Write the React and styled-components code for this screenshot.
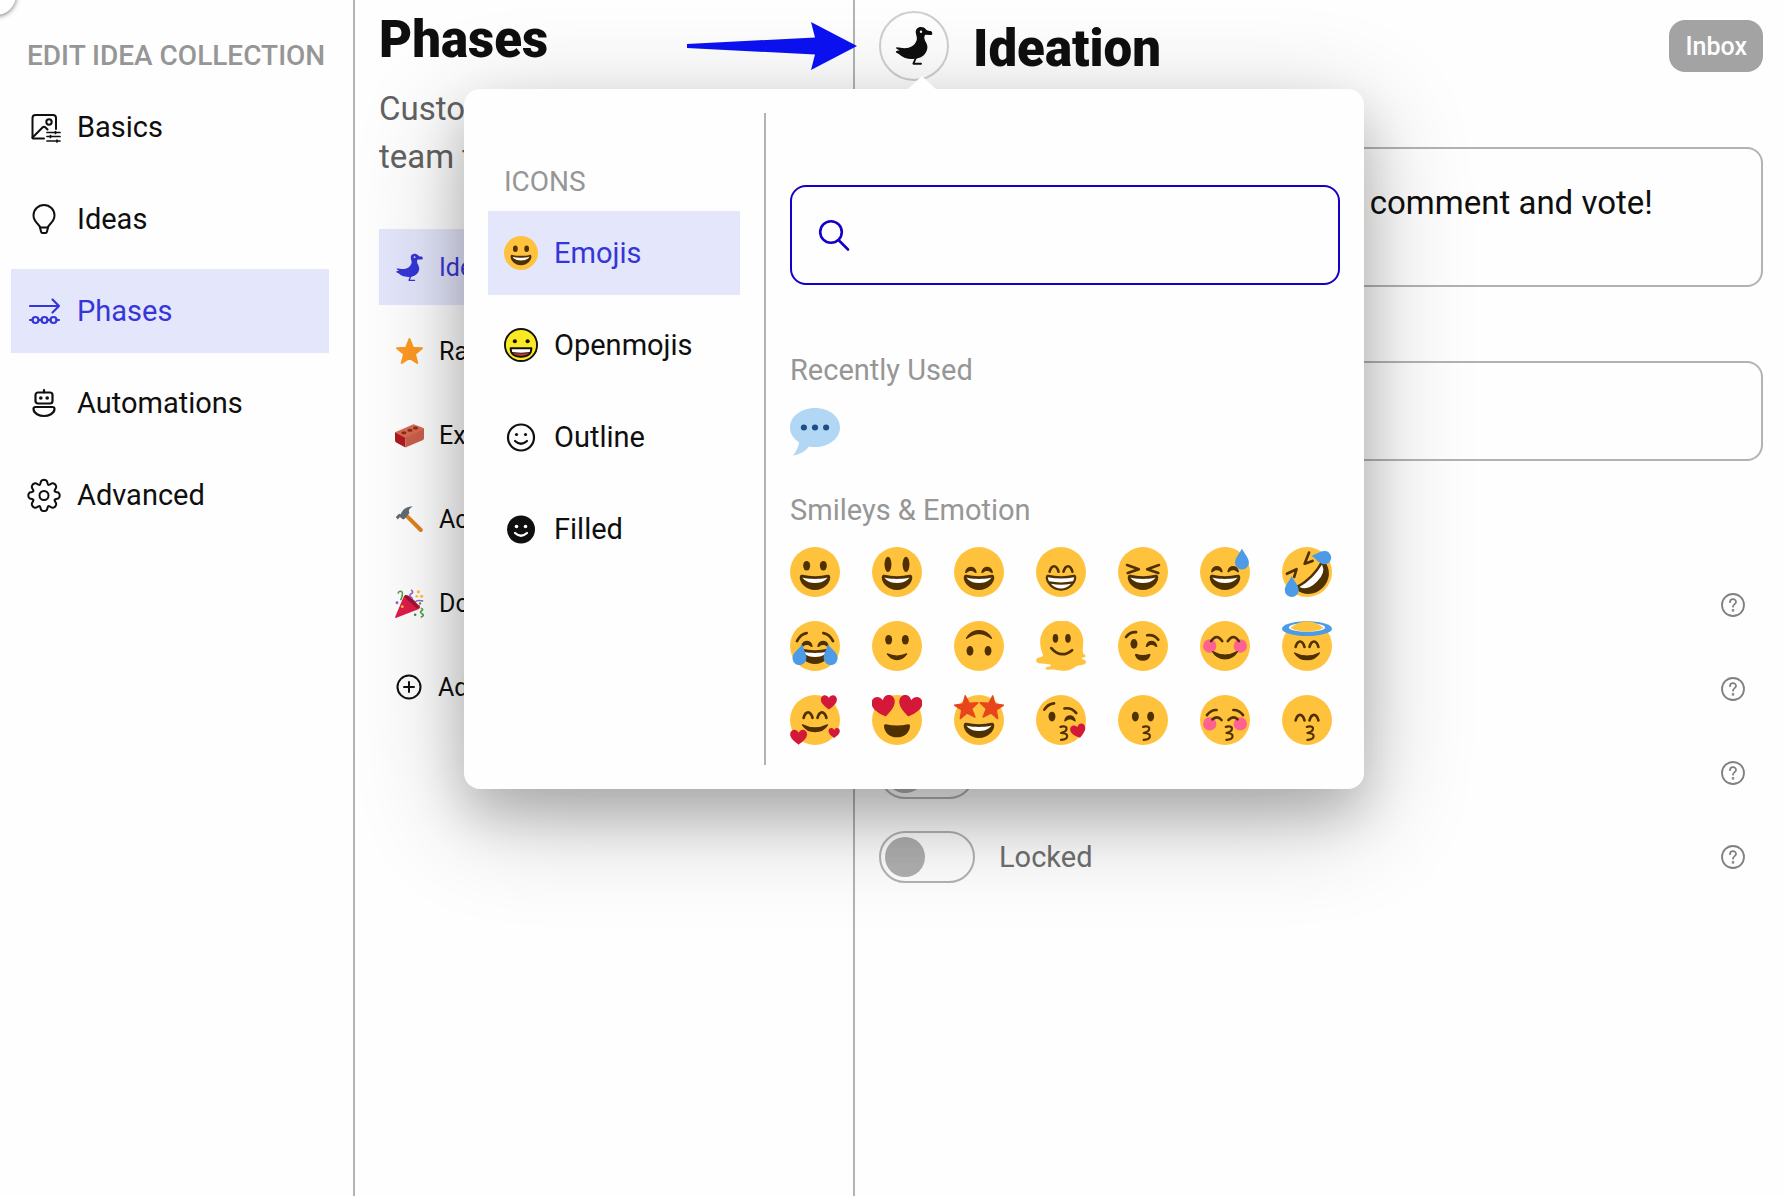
import React from "react";
import styled, { createGlobalStyle, css } from "styled-components";

const color = {
  ink: "#0f0f0f",
  accent: "#3636d8",
  accentSoft: "#e4e6fb",
  muted: "#969696",
  text: "#626262",
  line: "#b3b3b3",
  focus: "#1400c8",
  face: "#ffc23c",
  brown: "#4f3000",
  tear: "#4d9be6",
  heart: "#d31838",
  blush: "#ff6190",
};

const GlobalStyle = createGlobalStyle`
  *, *::before, *::after { box-sizing: border-box; }
  body {
    margin: 0;
    background: #fefefe;
    color: ${color.ink};
    font-family: Roboto, "Liberation Sans", sans-serif;
    font-size: 29px;
    overflow: hidden;
  }
  button, input, textarea { font: inherit; color: inherit; }
  h1, h2, h3, p, ul { margin: 0; padding: 0; }
  ul { list-style: none; }
`;

/* ---------- layout ---------- */

const Page = styled.div`
  display: flex;
  min-height: 100vh;
`;

const Sidebar = styled.nav`
  flex: 0 0 355px;
  border-right: 2px solid ${color.line};
  padding: 36px 24px 0 11px;
`;

const SectionLabel = styled.h2`
  padding-left: 16px;
  font-size: 28px;
  font-weight: ${(p) => (p.$light ? 400 : 500)};
  line-height: 40px;
  white-space: nowrap;
  color: ${color.muted};
`;

const NavList = styled.ul`
  display: flex;
  flex-direction: column;
  gap: 8px;
  margin-top: 9px;
`;

const NavButton = styled.button`
  display: flex;
  align-items: center;
  gap: 16px;
  width: 100%;
  height: 84px;
  padding: 0 16px;
  border: 0;
  background: ${(p) => (p.$active ? color.accentSoft : "transparent")};
  color: ${(p) => (p.$active ? color.accent : color.ink)};
  font-size: 29px;
  text-align: left;
  white-space: nowrap;
  cursor: pointer;
  svg { flex: none; }
`;

const PhasesColumn = styled.section`
  position: relative;
  flex: 0 0 500px;
  border-right: 2px solid ${color.line};
  padding: 12px 0 0 24px;
`;

const Title = styled.h1`
  font-size: 51px;
  font-weight: 900;
  line-height: ${(p) => (p.$tall ? 76 : 56)}px;
`;

const Intro = styled.p`
  margin-top: 17px;
  padding-right: 24px;
  font-size: 33px;
  line-height: 48px;
  color: ${color.text};
`;

const PhaseList = styled.ul`
  display: flex;
  flex-direction: column;
  gap: 8px;
  margin-top: 48px;
`;

const PhaseButton = styled(NavButton)`
  gap: 15px;
  height: 76px;
  font-size: 25px;
`;

const Pointer = styled.svg`
  position: absolute;
  top: 22px;
  right: -4px;
  z-index: 3;
`;

const Detail = styled.main`
  flex: 1;
  padding: 11px 22px 0 24px;
`;

const DetailHeader = styled.header`
  display: flex;
  align-items: flex-start;
  gap: 24px;
`;

const PickerAnchor = styled.div`
  position: relative;
  z-index: 2;
  flex: none;
`;

const IconCircle = styled.button`
  display: grid;
  place-items: center;
  width: 70px;
  height: 70px;
  padding: 0;
  border: 2px solid #cfcfcf;
  border-radius: 50%;
  background: #fefefe;
  cursor: pointer;
`;

const InboxButton = styled.button`
  height: 52px;
  margin: 9px 0 0 auto;
  padding: 0 16px;
  border: 0;
  border-radius: 16px;
  background: #a3a3a3;
  color: #fff;
  font-size: 25px;
  font-weight: 500;
`;

const Fields = styled.div`
  display: flex;
  flex-direction: column;
  padding-top: 8px;
`;

const FieldLabel = styled.label`
  height: ${(p) => (p.$roomy ? 74 : 52)}px;
  padding-top: ${(p) => (p.$roomy ? 24 : 8)}px;
  font-size: 25px;
  line-height: 32px;
  color: ${color.text};
`;

const fieldBox = css`
  width: 100%;
  border: 2px solid ${color.line};
  border-radius: 16px;
  background: transparent;
  font-size: 33px;
  outline: none;
`;

const TextArea = styled.textarea`
  ${fieldBox}
  display: block;
  height: 140px;
  padding: 30px 18px;
  line-height: 48px;
  resize: none;
`;

const TextInput = styled.input`
  ${fieldBox}
  height: 100px;
  padding: 0 18px;
`;

const Settings = styled.ul`
  margin-top: 102px;
`;

const SettingRow = styled.li`
  display: flex;
  align-items: center;
  height: 84px;
  padding-right: 18px;
`;

const SettingLabel = styled.label`
  display: flex;
  align-items: center;
  gap: 24px;
  color: #707070;
`;

const Toggle = styled.input`
  appearance: none;
  display: flex;
  align-items: center;
  width: 96px;
  height: 52px;
  margin: 0;
  padding: 0 4px;
  border: 2px solid ${color.line};
  border-radius: 26px;
  background: transparent;
  &::before {
    content: "";
    width: 40px;
    height: 40px;
    border-radius: 50%;
    background: #b0b0b0;
  }
  &:checked { justify-content: flex-end; }
`;

const HelpButton = styled.button`
  display: flex;
  margin-left: auto;
  padding: 0;
  border: 0;
  background: none;
  color: #808080;
`;

const CornerBubble = styled.span`
  position: absolute;
  top: -25px;
  left: -24px;
  width: 40px;
  height: 40px;
  border-radius: 50%;
  background: #fff;
  box-shadow: 0 1px 5px rgba(0, 0, 0, 0.55);
`;

/* ---------- popover ---------- */

const Popover = styled.div`
  position: absolute;
  top: 78px;
  left: -415px;
  display: flex;
  width: 900px;
  height: 700px;
  padding: 24px;
  border-radius: 16px;
  background: #fefefe;
  box-shadow: 0 26px 50px rgba(0, 0, 0, 0.18), 0 28px 110px rgba(0, 0, 0, 0.24);
  &::before {
    content: "";
    position: absolute;
    top: -13px;
    left: 444px;
    border: solid transparent;
    border-width: 0 14px 13px;
    border-bottom-color: #fefefe;
  }
`;

const PickerMenu = styled.div`
  width: 278px;
  padding: 49px 24px 0 0;
  border-right: 2px solid ${color.line};
`;

const PickerPane = styled.div`
  flex: 1;
  padding: 72px 0 0 24px;
  overflow: hidden;
`;

const SearchBox = styled.label`
  display: flex;
  align-items: center;
  gap: 16px;
  height: 100px;
  padding: 0 25px;
  border: 2px solid ${color.focus};
  border-radius: 16px;
  color: ${color.focus};
  svg { flex: none; }
`;

const SearchInput = styled.input`
  flex: 1;
  min-width: 0;
  border: 0;
  background: none;
  color: ${color.ink};
  outline: none;
`;

const GroupTitle = styled.h3`
  margin-top: ${(p) => (p.$first ? 65 : 33)}px;
  font-size: 29px;
  font-weight: 400;
  line-height: 40px;
  color: ${color.muted};
`;

const EmojiGrid = styled.div`
  display: grid;
  grid-template-columns: repeat(7, 50px);
  gap: 24px 32px;
  margin-top: 17px;
`;

const EmojiButton = styled.button`
  display: flex;
  width: 50px;
  height: 50px;
  padding: 0;
  border: 0;
  background: none;
  cursor: pointer;
`;

/* ---------- line icons ---------- */

const Line = ({ w = 32, sw = 2, children, ...rest }) => (
  <svg width={w} height={w} viewBox={`0 0 ${w} ${w}`} fill="none" stroke="currentColor"
    strokeWidth={sw} strokeLinecap="round" strokeLinejoin="round" aria-hidden="true" {...rest}>
    {children}
  </svg>
);

const BasicsIcon = () => (
  <Line w={34}>
    <path d="M17 28.500H6L5.500 28V8a3 3 0 0 1 3-3H26a3 3 0 0 1 3 3v11" />
    <path d="M5.500 27.500L15.500 17.500Q17 16 18.500 17.500L20.500 19.500" />
    <circle cx="22" cy="12" r="2.700" />
    <path d="M20 22.500H33M20 26.500H33M20 31H33" strokeWidth="1.700" />
    <path d="M28.500 21.500v2M23.500 25.500v2M30 30v2" strokeWidth="1.700" />
  </Line>
);

const BulbIcon = () => (
  <Line w={34}>
    <path d="M13 25.500c0-3-6.500-5-6.500-12a10.500 10.500 0 0 1 21 0c0 7-6.500 9-6.500 12z" />
    <path d="M13 25.500l1 4q.3 1.500 1.500 1.500h3q1.200 0 1.500-1.500l1-4" />
  </Line>
);

const PhasesIcon = () => (
  <Line w={34} sw={2.2}>
    <path d="M3 12H32M25.500 5.500L32 12L25.500 18.500" />
    <circle cx="8.500" cy="26" r="3" />
    <circle cx="17.500" cy="26" r="3" />
    <circle cx="26.500" cy="26" r="3" />
    <path d="M3 26h2.500M11.500 26h3M20.500 26h3M29.500 26H32" />
  </Line>
);

const RobotIcon = () => (
  <Line w={34} sw={2.2}>
    <rect x="8.500" y="6.500" width="17" height="11" rx="2.500" />
    <path d="M17 4V6.500" />
    <path d="M8.500 21h17q2 0 2 2c0 4.500-6 7-10.500 7S6.500 27.500 6.500 23q0-2 2-2z" />
    <g fill="currentColor" stroke="none">
      <circle cx="13.800" cy="12" r="1.800" />
      <circle cx="20.200" cy="12" r="1.800" />
    </g>
  </Line>
);

const gearPath = (() => {
  const pts = [];
  for (let i = 0; i < 160; i++) {
    const t = (i / 160) * Math.PI * 2;
    const wave = Math.cos(8 * t);
    const r = 13.6 + 2.1 * Math.sign(wave) * Math.pow(Math.abs(wave), 0.7);
    const turn = t + 0.05 * Math.sin(8 * t);
    pts.push(`${(17 + r * Math.sin(turn)).toFixed(2)} ${(17.5 - r * Math.cos(turn)).toFixed(2)}`);
  }
  return `M${pts.join("L")}Z`;
})();

const GearIcon = () => (
  <Line w={34}>
    <path d={gearPath} />
    <circle cx="17" cy="17.500" r="4.500" />
  </Line>
);

const PlusCircleIcon = () => (
  <Line w={28}>
    <circle cx="14" cy="14" r="11.500" />
    <path d="M14 9v10M9 14h10" />
  </Line>
);

const SearchIcon = () => (
  <Line w={34} sw={2.6}>
    <circle cx="14" cy="14" r="10.800" />
    <path d="M22 22.500L31 31.500" />
  </Line>
);

const HelpIcon = () => (
  <Line w={24} sw={1.8}>
    <circle cx="12" cy="12" r="11" />
    <path d="M9 9.200c0-4 6-4 6-.3c0 2.100-3 2.300-3 4.800" />
    <circle cx="12" cy="17.400" r=".5" />
  </Line>
);

const OutlineSmile = () => (
  <Line w={34} sw={2.2}>
    <circle cx="17" cy="17.500" r="13" />
    <path d="M11 21q6 5.500 12 0" />
    <g fill="currentColor" stroke="none">
      <circle cx="12.500" cy="14.500" r="1.600" />
      <circle cx="21.500" cy="14.500" r="1.600" />
    </g>
  </Line>
);

const FilledSmile = () => (
  <svg width="34" height="34" viewBox="0 0 34 34" aria-hidden="true">
    <circle cx="17" cy="17.500" r="14" fill={color.ink} />
    <circle cx="12.500" cy="14.500" r="1.800" fill="#fff" />
    <circle cx="21.500" cy="14.500" r="1.800" fill="#fff" />
    <path d="M11 21q6 5.500 12 0" fill="none" stroke="#fff" strokeWidth="2.200" strokeLinecap="round" />
  </svg>
);

const Duck = ({ size = 40, eye = "#fefefe" }) => (
  <svg width={size} height={size} viewBox="0 0 38 40" fill="currentColor" aria-hidden="true">
    <path d="M26 1c-3.600 0-5.600 2.600-5.200 5.800c.3 2.700 1.500 4.300 1 6.700c-.8 4.400-4.800 8-10 8.600c-4 .5-6.800-.8-10-.8c-1.300.2-.6 1.500 1.200 2.300l1.800.9c-1.800.1-4 .3-4 1.200c0 1.200 2 1.500 3 2.300c3 3 7.800 5 13.200 5c2 0 3.300-.1 4.800-.4c5.600-1 10.200-5 10.600-11c.3-4.300-3.100-6.200-3.100-10c0-1.200.4-2.200 1.200-2.800l5 .2c1.600 0 1.900-.7 1.700-2.100c-.1-1.700-.8-1.900-2.600-2c-1.600-.1-2.800-.5-3.800-1.700C29.700 1.900 28.200 1 26 1z" />
    <circle cx="26" cy="5.800" r="1.200" fill={eye} />
    <path d="M21 31.500L18.400 37.700H26" fill="none" stroke="currentColor" strokeWidth="1.900" strokeLinecap="round" strokeLinejoin="round" />
  </svg>
);

/* ---------- phase pictures ---------- */

const Pic = ({ children }) => (
  <svg width="29" height="29" viewBox="0 0 36 36" aria-hidden="true">{children}</svg>
);

const StarPic = () => (
  <Pic>
    <path fill="#ff9a24" stroke="#ff9a24" strokeWidth="2.500" strokeLinejoin="round"
      d="M18 2.500l4.200 10.700 11.300.7-8.800 7.300 2.900 11.100L18 26.100l-9.600 6.200 2.900-11.100-8.800-7.300 11.300-.7z" />
  </Pic>
);

const BrickPic = () => (
  <Pic>
    <path fill="#d96b52" d="M0 14L23 4l13 5v3L13 22z" />
    <path fill="#b01820" d="M0 14l13 7v12L2 27q-2-1-2-3z" />
    <path fill="#c9604d" d="M13 21l23-11v11q0 2-2 3L13 33z" />
    <ellipse cx="11" cy="14.500" rx="3.200" ry="1.900" fill="#8d2a1e" />
    <ellipse cx="18.500" cy="11.500" rx="3.200" ry="1.900" fill="#8d2a1e" />
    <ellipse cx="25.500" cy="8.800" rx="3.200" ry="1.900" fill="#8d2a1e" />
  </Pic>
);

const HammerPic = () => (
  <Pic>
    <path d="M12 11L32 31" stroke="#e0811f" strokeWidth="5" strokeLinecap="round" />
    <path fill="#5f6b73" d="M1 15l4-4 2 .5C9 7 12 2 22 1.500c-4 3-6 5-4 8.500l-6 7-2 1-4-3-2.500 3z" />
  </Pic>
);

const PopperPic = () => (
  <Pic>
    <path fill="#dd1c48" d="M0 35L11 9q2-3 9 4t10 7q3 3-1 5L1 36z" />
    <path fill="#9e1234" d="M12 8c3-2 9 3 12.500 7s6.500 7 4 9.500c-3-2-5-3-8.500-7S12 12 12 8z" />
    <path d="M4 6q0-4 4-3q3 2-1 11" fill="none" stroke="#4fa640" strokeWidth="2" />
    <path d="M20 1q4 3 0 5t2 6M25 16q3-3 10-1" fill="none" stroke="#9266cc" strokeWidth="2" />
    <path d="M32 24q4 1 1 3t1 4q3 2-2 4" fill="none" stroke="#4fa640" strokeWidth="2" />
    <g fill="#ffc23c"><circle cx="29" cy="3.500" r="2" /><circle cx="33" cy="9" r="2" /><circle cx="27" cy="9" r="1.700" /><circle cx="9" cy="22" r="1.700" /></g>
    <circle cx="2.500" cy="17" r="1.800" fill="#9266cc" />
    <circle cx="25" cy="32" r="1.600" fill="#3a8d4c" />
    <circle cx="31" cy="18" r="1.500" fill="#5c9c3c" />
  </Pic>
);

/* ---------- emoji parts (36 × 36 grid) ---------- */

const Stroke = ({ d, w = 1.9 }) => (
  <path d={d} fill="none" stroke={color.brown} strokeWidth={w} strokeLinecap="round" strokeLinejoin="round" />
);
const Disc = () => <circle cx="18" cy="18" r="18" fill={color.face} />;
const Eyes = ({ y = 13.5, a = 12, b = 24, rx = 2.5, ry = 3.5 }) => (
  <g fill={color.brown}>
    <ellipse cx={a} cy={y} rx={rx} ry={ry} />
    <ellipse cx={b} cy={y} rx={rx} ry={ry} />
  </g>
);
const Grin = () => (
  <>
    <path fill={color.brown} d="M18 21c-3.600 0-6-.4-9-1c-.7-.1-2 0-2 2c0 4 4.600 9 11 9s11-5 11-9c0-2-1.300-2.100-2-2c-3 .6-5.400 1-9 1z" />
    <path fill="#fff" d="M9 22s3 1 9 1s9-1 9-1s-2 4-9 4s-9-4-9-4z" />
  </>
);
const crescent = "M0 4C.8-1 7.500-1 8.300 4c.2.900-.7 1-1.300.5c-1.400-1.600-4.300-1.600-5.700 0C.700 5-.2 4.900 0 4z";
const SoftEyes = ({ y = 14, a = 8, b = 19.7 }) => (
  <g fill={color.brown}>
    <path d={crescent} transform={`translate(${a} ${y})`} />
    <path d={crescent} transform={`translate(${b} ${y})`} />
  </g>
);
const ArchEyes = ({ y = 17.8 }) => (
  <>
    <Stroke d={`M9.800 ${y}c1.500-5.300 5-5.300 6.400 0`} />
    <Stroke d={`M19.800 ${y}c1.500-5.300 5-5.300 6.400 0`} />
  </>
);
/* Crescent smile: "depth" is the lower edge, "rise" the upper edge. */
const Smile = ({ y = 22, a = 8.5, depth = 7, rise = 5 }) => {
  const b = 36 - a;
  return <path fill={color.brown} stroke={color.brown} strokeWidth=".9" strokeLinejoin="round"
    d={`M${a} ${y}Q18 ${y + rise} ${b} ${y}C${b - 4} ${y + depth} ${a + 4} ${y + depth} ${a} ${y}z`} />;
};
const Drop = ({ t }) => (
  <path transform={t} fill={color.tear} d="M5 0C6.500 3.500 10 6.500 10 10.300A5 4.900 0 0 1 0 10.300C0 6.500 3.500 3.500 5 0z" />
);
const Heart = ({ x, y, s = 1, r = 0 }) => (
  <path fill={color.heart} transform={`translate(${x} ${y}) rotate(${r}) scale(${s})`}
    d="M0 5.200C-2.500 3.500-5.800 1-5.800-1.900C-5.800-5.500-1.500-6.300 0-3C1.500-6.300 5.800-5.500 5.800-1.900C5.800 1 2.500 3.500 0 5.200z" />
);
const Blush = ({ y = 18 }) => (
  <g fill={color.blush}>
    <circle cx="7" cy={y} r="4.800" />
    <circle cx="29" cy={y} r="4.800" />
  </g>
);
const Kiss = ({ x = 18 }) => (
  <Stroke w={1.5} d={`M${x} 23c2-.9 4.800-.3 4.500 1.500c-.3 1.700-2.200 2.500-4 2.800c2 0 4.400.4 4.500 2.300c0 1.800-2 2.600-4.500 2.700`} />
);
const starShape = "M0-8.500L2.200-2.900L8.500-2.600L3.600 1.300L5.300 7.500L0 4L-5.300 7.500L-3.600 1.300L-8.500-2.600L-2.200-2.900Z";

const emojis = {
  "grinning face": <><Disc /><Eyes /><Grin /></>,
  "grinning face with big eyes": <><Disc /><Eyes a={11.5} b={24.5} y={12.5} ry={5.5} /><Grin /></>,
  "grinning face with smiling eyes": <><Disc /><SoftEyes /><Grin /></>,
  "beaming face": (
    <>
      <Disc /><ArchEyes />
      <path fill={color.brown} d="M18 21c-3.600 0-6-.4-9-1c-.7-.1-2 0-2 2c0 4 4.600 9.500 11 9.500s11-5.500 11-9.500c0-2-1.300-2.100-2-2c-3 .6-5.400 1-9 1z" />
      <path fill="#fff" d="M8.500 21.700q9.500 2 19 0q-.2 2-1 3q-8.500 1.600-17 0q-.8-1-1-3zM10.700 26.500q7.300 1.300 14.600 0q-3 3.400-7.300 3.400t-7.300-3.400z" />
    </>
  ),
  "squinting face": <><Disc /><Stroke d="M6.500 13L15 16L7 18.700" /><Stroke d="M29.500 13L21 16L29 18.700" /><Grin /></>,
  "grinning face with sweat": <><Disc /><SoftEyes y={13.5} /><Grin /><Drop t="translate(25.200 1)" /></>,
  "rolling on the floor laughing": (
    <>
      <Disc />
      <g transform="rotate(-45 18 18)">
        <path fill={color.brown} d="M18 21.500c-5 0-9-.8-12.500-2c-1.500-.4-2 .8-1.800 2.500C4.500 28.500 10 34 18 34s13.500-5.500 14.300-12c.2-1.700-.3-2.900-1.800-2.500c-3.500 1.200-7.500 2-12.500 2z" />
        <path fill="#fff" d="M6.500 21.800q11.500 3 23 0Q27.500 28 18 28T6.500 21.800z" />
      </g>
      <Stroke d="M3.500 19.300L10.500 16L8.800 21.500" />
      <Stroke d="M19.500 4L16.300 12L22 10" />
      <Drop t="translate(2 20.800)" />
      <Drop t="translate(20.400 11) rotate(-82) scale(.95)" />
    </>
  ),
  "face with tears of joy": (
    <>
      <Disc /><Stroke d="M5 14.500Q7.500 9.500 12 8.700" /><Stroke d="M31 14.500Q28.500 9.500 24 8.700" />
      <SoftEyes y={14} /><Grin />
      <Drop t="translate(4 15.700) rotate(12)" />
      <Drop t="translate(22.300 17.800) rotate(-12)" />
    </>
  ),
  "slightly smiling face": <><Disc /><Eyes /><Smile y={23.7} a={11} depth={5.5} rise={3.2} /></>,
  "upside-down face": <><Disc /><g transform="rotate(180 18 18)"><Eyes y={14.5} a={11.5} b={24.5} /><Smile y={23.5} a={9} depth={7.5} rise={7} /></g></>,
  "melting face": (
    <>
      <path fill={color.face} d="M3 15A15.500 15.500 0 0 1 34 15c0 4-1 7 .5 9c1 .8 1.500 1 1 1.800c-.6.800-2.500.2-2.500 1.200s3 .5 3 2.600s-4 2.400-6 2.600s-3 2.800-8 3.500c-5 .6-7-.8-9.500-.8s-5 .6-5.500-.6c-.4-1.500 4-1 3.800-2.500S2 31.500.5 29.500C-.8 27 1.500 26.500 3.500 26c2-.6 1.500-1.500 1-3C3.500 20 3 18 3 15z" />
      <Eyes a={14} b={23} y={12.5} rx={2} ry={3.2} /><Stroke d="M11 19.500Q18 27.500 26 21" />
    </>
  ),
  "winking face": (
    <>
      <Disc /><Stroke d="M5.800 11.500Q8.500 7.800 13 8" /><Stroke d="M21 10.300Q26 9.500 29 13.500" />
      <ellipse cx="11.500" cy="16.500" rx="2.500" ry="3.500" fill={color.brown} />
      <g fill={color.brown}><path d={crescent} transform="translate(20 14)" /></g>
      <path fill={color.brown} d="M13 23.500q4.800 1.800 9.600 0q1 0 .8 1.200q-1.400 4-5.500 4t-5.700-4q-.2-1.200.8-1.200z" />
    </>
  ),
  "smiling face with blush": <><Disc /><Blush /><Stroke d="M8 14.500Q12 8.500 16 14.500" /><Stroke d="M20 14.500Q24 8.500 28 14.500" /><Smile y={22} a={9} /></>,
  "smiling face with halo": (
    <>
      <Disc /><ellipse cx="18" cy="5.500" rx="18" ry="5.300" fill={color.tear} />
      <ellipse cx="18" cy="4.600" rx="13" ry="3.200" fill="#fff" />
      <path d="M6 5Q18-4.500 30 5Q18 10.500 6 5z" fill={color.face} />
      <ArchEyes y={18.7} /><Smile y={23} a={9} depth={6.5} rise={4.5} />
    </>
  ),
  "smiling face with hearts": (
    <><Disc /><ArchEyes y={16.5} /><Smile y={21.5} a={9} depth={6.5} rise={4.5} />
      <Heart x={28} y={5.2} s={1} /><Heart x={6.2} y={30.3} s={1.05} /><Heart x={31.8} y={27.3} s={0.7} /></>
  ),
  "heart eyes": (
    <><Disc /><Heart x={8.5} y={8} s={1.45} r={-10} /><Heart x={27.5} y={8} s={1.45} r={10} />
      <path fill={color.brown} d="M10 21q8 2 16 0q1.500-.2 1.400 1.500C27 27 23.500 30.500 18 30.500S9 27 8.600 22.500Q8.500 20.800 10 21z" /></>
  ),
  "star-struck": (
    <><Disc /><g fill="#e8451c" stroke="#e8451c" strokeLinejoin="round">
      <path d={starShape} transform="translate(9 9) rotate(-6)" /><path d={starShape} transform="translate(27 9) rotate(6)" /></g><Grin /></>
  ),
  "face blowing a kiss": (
    <><Disc /><Stroke d="M6 10.500Q8.500 6.500 13 6" /><Stroke d="M20.500 9.700Q25.500 8.800 29 13" />
      <ellipse cx="11.500" cy="15.500" rx="2.500" ry="3.500" fill={color.brown} />
      <g fill={color.brown}><path d={crescent} transform="translate(20.300 14.300)" /></g>
      <Kiss x={17.5} /><Heart x={30.5} y={26} s={0.95} r={-15} /></>
  ),
  "kissing face": <><Disc /><Eyes a={12.5} b={23.5} y={15.5} /><Kiss /></>,
  "kissing face with closed eyes": (
    <><Disc /><Blush y={20.8} /><Stroke d="M5 14.500Q8 10.500 12 10.800" /><Stroke d="M24 10.800Q28 10.500 31 14.500" />
      <Stroke d="M9 17.500Q12.500 14.500 15.500 18" /><Stroke d="M20.500 18Q24 14.500 27 17.500" /><Kiss x={18.5} /></>
  ),
  "kissing face with smiling eyes": <><Disc /><ArchEyes y={18.3} /><Kiss x={17.8} /></>,
};

const Emoji = ({ size = 50, children }) => (
  <svg width={size} height={size} viewBox="0 0 36 36" aria-hidden="true">{children}</svg>
);

const OpenmojiFace = () => (
  <svg width="34" height="34" viewBox="0 0 36 36" aria-hidden="true">
    <circle cx="18" cy="18" r="17" fill="#fbea22" stroke="#111" strokeWidth="2" />
    <circle cx="11.500" cy="14" r="2.200" fill="#111" />
    <circle cx="25" cy="14" r="2.200" fill="#111" />
    <path d="M7 21.500h22q0 9-11 9t-11-9z" fill="#fff" stroke="#111" strokeWidth="2" strokeLinejoin="round" />
    <path d="M8.500 26q9.500 1.500 19 0q-2.500 4-9.500 4t-9.500-4z" fill="#c8352d" stroke="#111" strokeWidth="1" />
  </svg>
);

const SpeechBubble = () => (
  <Emoji>
    <path fill="#b1d7f5" d="M18 .8C8 .8 0 7 0 14.700c0 4.400 2.600 8.200 6.600 10.800C6.100 28 5 31.500 2 35c5.700-1 9.400-3.500 11.700-6.600c1.400.2 2.800.4 4.300.4c10 0 18-6.300 18-14.100S28 .8 18 .8z" />
    <g fill="#1c4f86"><circle cx="10" cy="14.800" r="2.200" /><circle cx="18" cy="14.800" r="2.200" /><circle cx="26" cy="14.800" r="2.200" /></g>
  </Emoji>
);

/* ---------- content ---------- */

const navItems = [
  ["Basics", BasicsIcon],
  ["Ideas", BulbIcon],
  ["Phases", PhasesIcon],
  ["Automations", RobotIcon],
  ["Advanced", GearIcon],
];

const phases = [
  ["Ideation", <Duck size={29} eye="#dfe0f5" />],
  ["Rating", <StarPic />],
  ["Expand", <BrickPic />],
  ["Action", <HammerPic />],
  ["Done", <PopperPic />],
  ["Add", <PlusCircleIcon />],
];

const iconSets = [
  ["Emojis", <Emoji size={34}>{emojis["grinning face"]}</Emoji>],
  ["Openmojis", <OpenmojiFace />],
  ["Outline", <OutlineSmile />],
  ["Filled", <FilledSmile />],
];

const settings = ["Voting", "Comments", "Hidden", "Locked"];

function IconPicker() {
  return (
    <Popover role="dialog" aria-label="Choose an icon">
      <PickerMenu>
        <SectionLabel $light>ICONS</SectionLabel>
        <NavList>
          {iconSets.map(([name, icon], i) => (
            <li key={name}>
              <NavButton type="button" $active={i === 0}>{icon}{name}</NavButton>
            </li>
          ))}
        </NavList>
      </PickerMenu>
      <PickerPane>
        <SearchBox>
          <SearchIcon />
          <SearchInput type="text" aria-label="Search icons" />
        </SearchBox>
        <GroupTitle $first>Recently Used</GroupTitle>
        <EmojiGrid>
          <EmojiButton type="button" aria-label="speech balloon"><SpeechBubble /></EmojiButton>
        </EmojiGrid>
        <GroupTitle>Smileys &amp; Emotion</GroupTitle>
        <EmojiGrid>
          {Object.entries(emojis).map(([name, art]) => (
            <EmojiButton key={name} type="button" aria-label={name}><Emoji>{art}</Emoji></EmojiButton>
          ))}
        </EmojiGrid>
      </PickerPane>
    </Popover>
  );
}

export default function App() {
  return (
    <>
      <GlobalStyle />
      <Page>
        <Sidebar>
          <CornerBubble />
          <SectionLabel>EDIT IDEA COLLECTION</SectionLabel>
          <NavList>
            {navItems.map(([name, Icon]) => (
              <li key={name}>
                <NavButton type="button" $active={name === "Phases"}><Icon />{name}</NavButton>
              </li>
            ))}
          </NavList>
        </Sidebar>

        <PhasesColumn>
          <Title>Phases</Title>
          <Intro>Customize the phases your team to</Intro>
          <PhaseList>
            {phases.map(([name, icon], i) => (
              <li key={name}>
                <PhaseButton type="button" $active={i === 0}>{icon}{name}</PhaseButton>
              </li>
            ))}
          </PhaseList>
          <Pointer width="170" height="48" viewBox="0 0 170 48" aria-hidden="true">
            <path fill="#0a10ee" d="M0 22L128 15.500L124 0L170 24L124 48L128 32.500L0 26z" />
          </Pointer>
        </PhasesColumn>

        <Detail>
          <DetailHeader>
            <PickerAnchor>
              <IconCircle type="button" aria-label="Change icon"><Duck /></IconCircle>
              <IconPicker />
            </PickerAnchor>
            <Title as="h2" $tall>Ideation</Title>
            <InboxButton type="button">Inbox</InboxButton>
          </DetailHeader>
          <Fields>
            <FieldLabel htmlFor="description">Description</FieldLabel>
            <TextArea id="description" defaultValue="Share your own ideas, then also comment and vote!" />
            <FieldLabel htmlFor="placeholder" $roomy>Placeholder</FieldLabel>
            <TextInput id="placeholder" type="text" />
          </Fields>
          <Settings>
            {settings.map((name) => (
              <SettingRow key={name}>
                <SettingLabel><Toggle type="checkbox" />{name}</SettingLabel>
                <HelpButton type="button" aria-label={`About ${name}`}><HelpIcon /></HelpButton>
              </SettingRow>
            ))}
          </Settings>
        </Detail>
      </Page>
    </>
  );
}
